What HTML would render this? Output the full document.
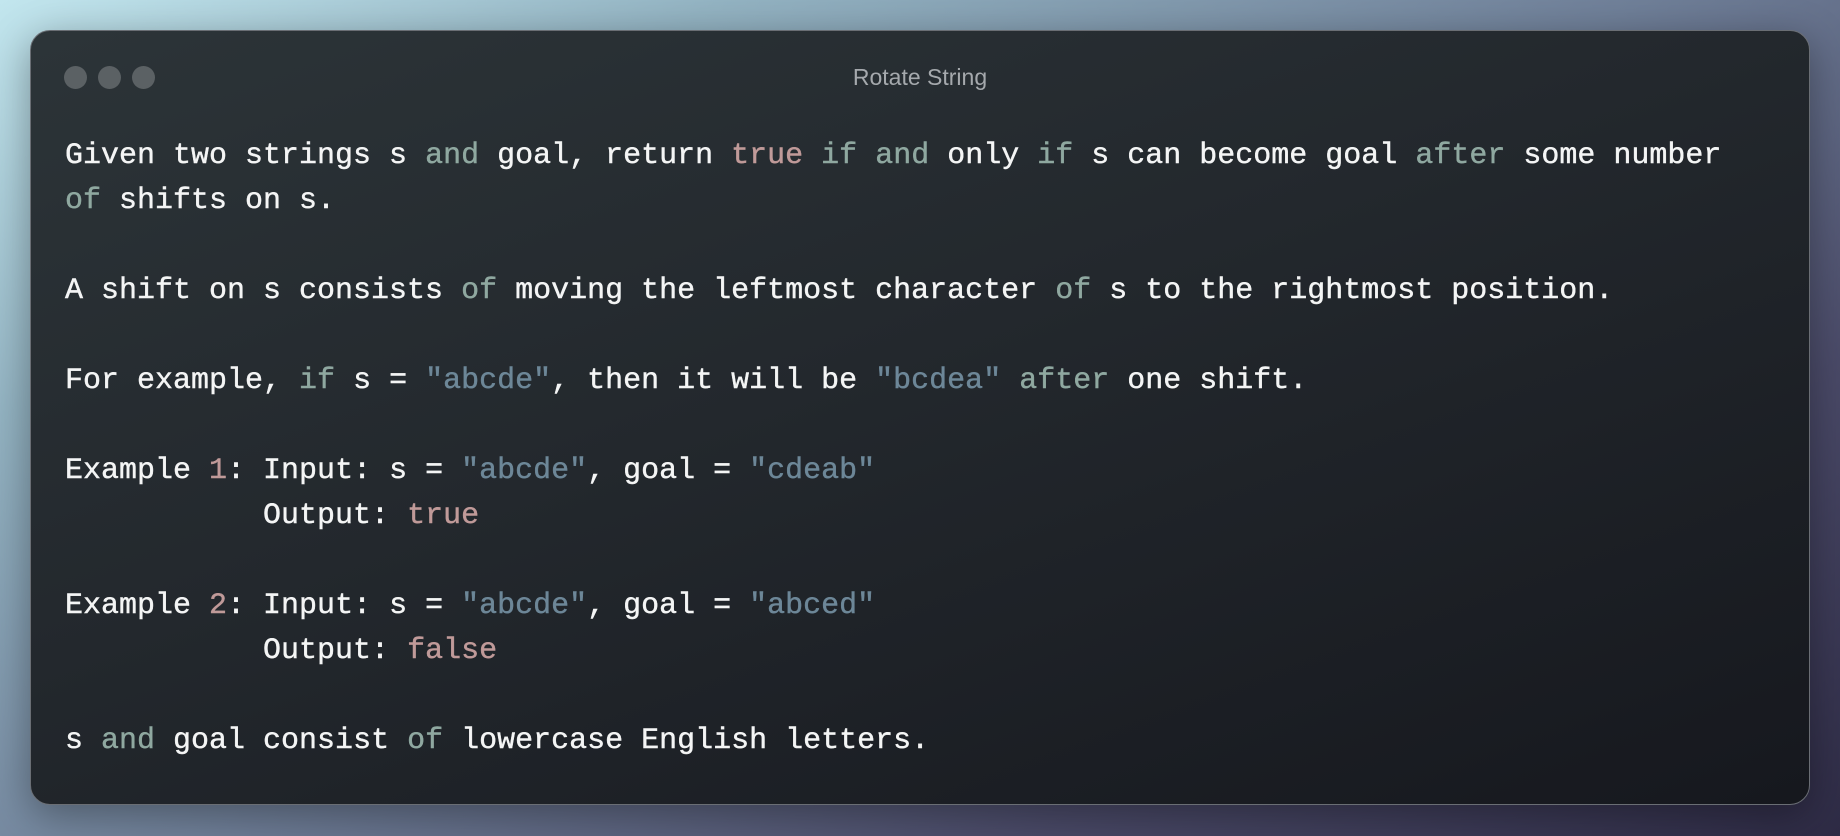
<!DOCTYPE html>
<html><head><meta charset="utf-8"><style>
html,body{margin:0;padding:0;}
body{width:1840px;height:836px;overflow:hidden;background:linear-gradient(150deg,#c2e6ee 0%,#93b3c2 22%,#6f7f98 50%,#4a4a68 75%,#2e2b45 100%);position:relative;}
.win{position:absolute;left:30px;top:30px;width:1780px;height:775px;border-radius:20px;border:1.5px solid #6a6e74;box-sizing:border-box;background:linear-gradient(160deg,#2c3438 0%,#23282d 45%,#16181e 100%);box-shadow:0 10px 40px rgba(0,0,0,.35);}
.dot{position:absolute;top:35px;width:23px;height:23px;border-radius:50%;background:#5b6164;}
.title{position:absolute;left:0;right:0;text-align:center;top:33px;font:23px "Liberation Sans",sans-serif;color:#a5a9ad;}
pre{position:absolute;left:34px;top:103px;margin:0;font:30px/45px "Liberation Mono",monospace;color:#f4f5f5;-webkit-text-stroke:0.4px #f4f5f5;}
.k{color:#8fa8a0;-webkit-text-stroke-color:#8fa8a0}.s{color:#6d8798;-webkit-text-stroke-color:#6d8798}.n{color:#c09a99;-webkit-text-stroke-color:#c09a99}
</style></head><body>
<div class="win">
<div class="dot" style="left:33px"></div><div class="dot" style="left:67px"></div><div class="dot" style="left:101px"></div>
<div class="title">Rotate String</div>
<pre>Given two strings s <span class="k">and</span> goal, return <span class="n">true</span> <span class="k">if</span> <span class="k">and</span> only <span class="k">if</span> s can become goal <span class="k">after</span> some number
<span class="k">of</span> shifts on s.

A shift on s consists <span class="k">of</span> moving the leftmost character <span class="k">of</span> s to the rightmost position.

For example, <span class="k">if</span> s = <span class="s">"abcde"</span>, then it will be <span class="s">"bcdea"</span> <span class="k">after</span> one shift.

Example <span class="n">1</span>: Input: s = <span class="s">"abcde"</span>, goal = <span class="s">"cdeab"</span>
           Output: <span class="n">true</span>

Example <span class="n">2</span>: Input: s = <span class="s">"abcde"</span>, goal = <span class="s">"abced"</span>
           Output: <span class="n">false</span>

s <span class="k">and</span> goal consist <span class="k">of</span> lowercase English letters.</pre>
</div>
</body></html>
